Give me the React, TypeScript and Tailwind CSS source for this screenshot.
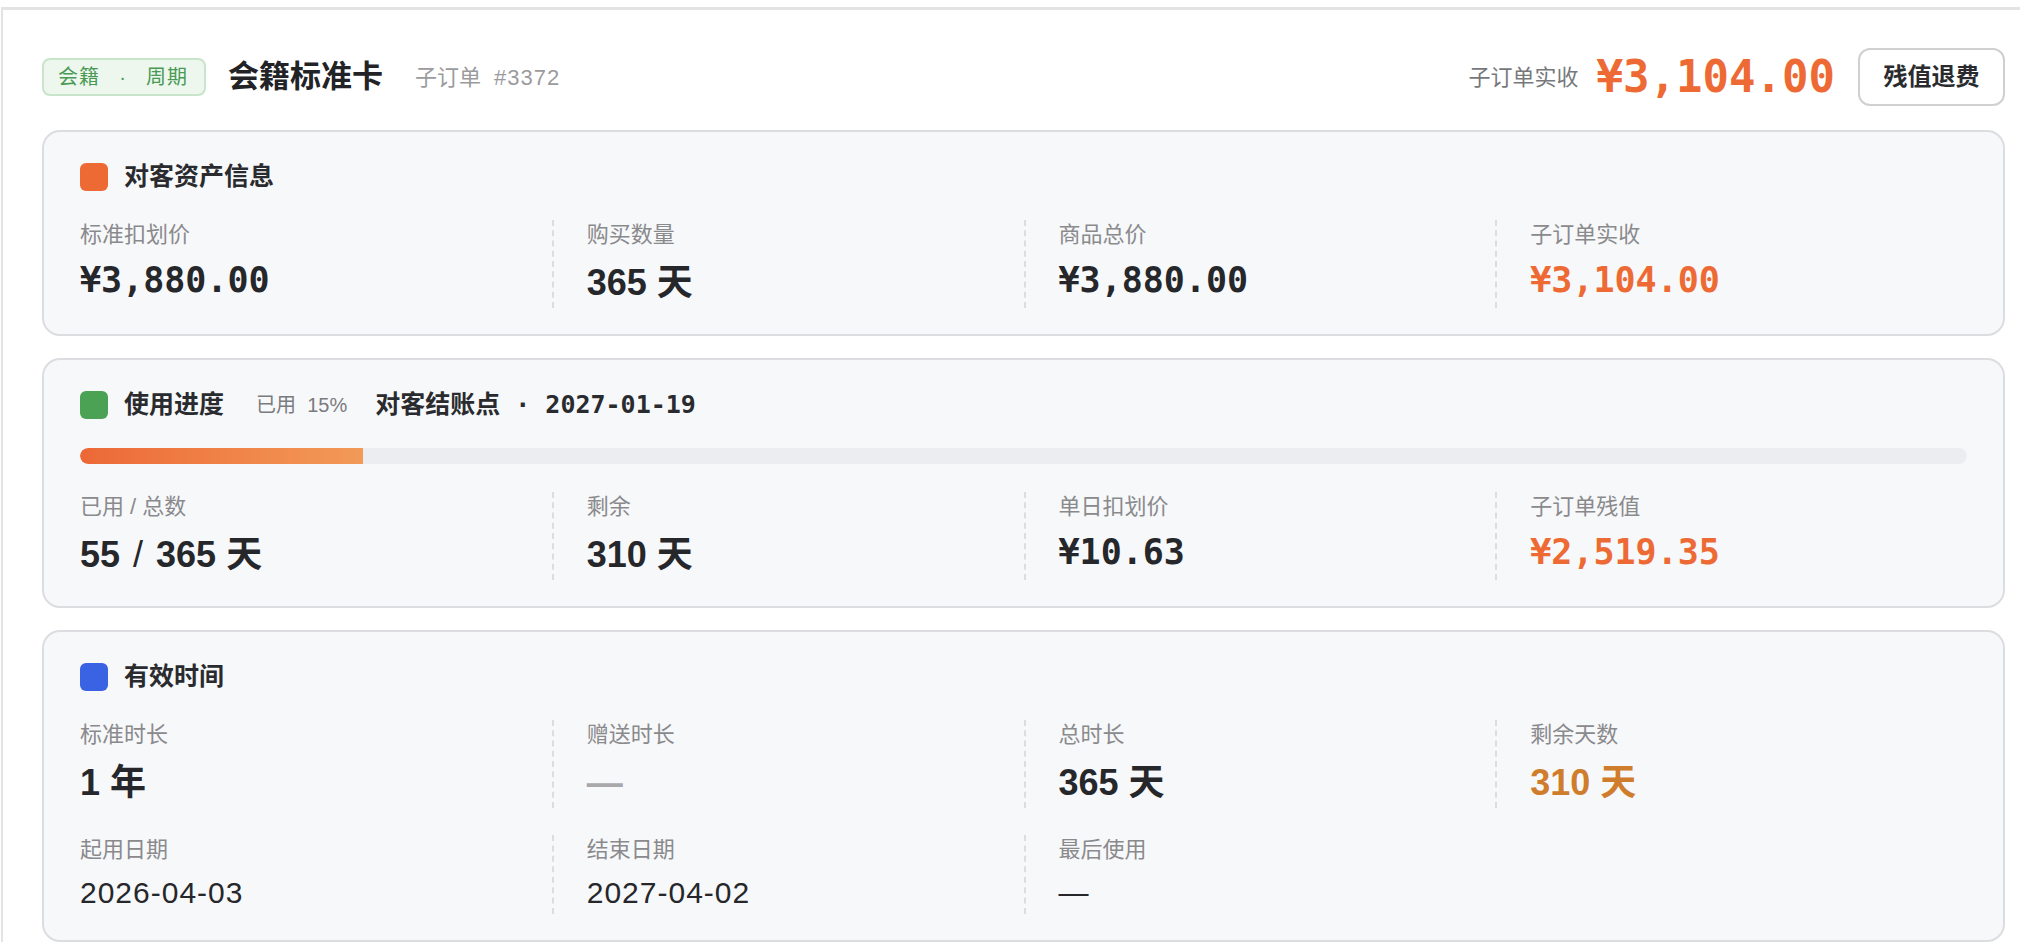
import React from 'react';

const SANS = { fontFamily: '"Liberation Sans", "Noto Sans CJK SC", sans-serif' };
const MONO = { fontFamily: '"DejaVu Sans Mono", "Noto Sans CJK SC", monospace' };

type Cell = {
  label: string;
  value: React.ReactNode;
  mono?: boolean;
  tone?: 'dark' | 'orange' | 'amber' | 'muted';
};

const toneClass: Record<NonNullable<Cell['tone']>, string> = {
  dark: 'text-[#26272b]',
  orange: 'text-[#ee6a35]',
  amber: 'text-[#cf7d2c]',
  muted: 'text-[#a9a9ab]',
};

function CellGrid({ cells, size = 'lg' }: { cells: Cell[]; size?: 'lg' | 'md' }) {
  return (
    <div className="grid grid-cols-4">
      {cells.map((c, i) => (
        <div
          key={c.label}
          className={`flex flex-col pb-[3px] ${i > 0 ? 'border-l-2 border-dashed border-[#dcdde0] pl-[33px]' : ''}`}
        >
          <div className="text-[22px] leading-[30px] text-[#8a8a8d]">{c.label}</div>
          {size === 'lg' ? (
            c.mono ? (
              <div className={`mb-[3px] mt-[8px] text-[35px] font-bold leading-[44px] ${toneClass[c.tone ?? 'dark']}`} style={MONO}>
                {c.value}
              </div>
            ) : (
              <div className={`mt-[11px] text-[36px] font-semibold leading-[44px] ${toneClass[c.tone ?? 'dark']}`} style={SANS}>
                {c.value}
              </div>
            )
          ) : (
            <div className={`mt-[10px] text-[30px] leading-[36px] tracking-[1px] ${toneClass[c.tone ?? 'dark']}`} style={SANS}>
              {c.value}
            </div>
          )}
        </div>
      ))}
    </div>
  );
}

function Card({ color, title, extra, children }: { color: string; title: string; extra?: React.ReactNode; children: React.ReactNode }) {
  return (
    <section className="rounded-[18px] border-2 border-[#dcdde0] bg-[#f7f8fa] px-[36px] pt-[30px] pb-[26px]">
      <div className="flex h-[30px] items-center">
        <span className={`h-[28px] w-[28px] rounded-[6px] ${color}`} />
        <h3 className="ml-[16px] text-[25px] font-bold text-[#2a2b2e]">{title}</h3>
        {extra}
      </div>
      {children}
    </section>
  );
}

export default function App() {
  const usedPct = 15;

  const assetCells: Cell[] = [
    { label: '标准扣划价', value: '¥3,880.00', mono: true },
    { label: '购买数量', value: '365 天' },
    { label: '商品总价', value: '¥3,880.00', mono: true },
    { label: '子订单实收', value: '¥3,104.00', mono: true, tone: 'orange' },
  ];

  const usageCells: Cell[] = [
    {
      label: '已用 / 总数',
      value: (
        <>
          55<span className="mx-[13px] font-normal">/</span>365 天
        </>
      ),
    },
    { label: '剩余', value: '310 天' },
    { label: '单日扣划价', value: '¥10.63', mono: true },
    { label: '子订单残值', value: '¥2,519.35', mono: true, tone: 'orange' },
  ];

  const durationCells: Cell[] = [
    { label: '标准时长', value: '1 年' },
    { label: '赠送时长', value: '—', tone: 'muted' },
    { label: '总时长', value: '365 天' },
    { label: '剩余天数', value: '310 天', tone: 'amber' },
  ];

  const dateCells: Cell[] = [
    { label: '起用日期', value: '2026-04-03' },
    { label: '结束日期', value: '2027-04-02' },
    { label: '最后使用', value: '—' },
  ];

  return (
    <div className="min-h-screen bg-white" style={SANS}>
      <div className="ml-[1px] mt-[7px] border-l-2 border-t-[3px] border-[#e3e3e5] pl-[39px] pr-[15px] pt-[38px]">
        {/* Header */}
        <div className="flex h-[58px] items-center">
          <span className="flex h-[38px] items-center gap-[19px] rounded-[8px] border-2 border-[#c8e5cc] bg-[#edf7ee] pl-[14px] pr-[16px] text-[20px] tracking-[1px] text-[#4a9a55]">
            <span>会籍</span>
            <span className="w-[8px] text-center">·</span>
            <span>周期</span>
          </span>
          <h1 className="ml-[22px] text-[31px] font-bold text-[#222326]">会籍标准卡</h1>
          <span className="ml-[32px] text-[22px] text-[#9b9b9e]">子订单</span>
          <span className="ml-[13px] text-[22px] tracking-[1px] text-[#9b9b9e]">#3372</span>

          <div className="ml-auto flex items-center">
            <span className="text-[22px] text-[#77787b]">子订单实收</span>
            <span className="ml-[18px] text-[44px] font-bold leading-none text-[#ee6a35]" style={MONO}>
              ¥3,104.00
            </span>
            <button className="ml-[23px] h-[58px] w-[147px] rounded-[12px] border-2 border-[#cfd0d2] bg-white text-[24px] font-bold text-[#2a2b2e]">
              残值退费
            </button>
          </div>
        </div>

        <div className="mt-[24px] flex flex-col gap-[22px]">
          <Card color="bg-[#ee6a35]" title="对客资产信息">
            <div className="mt-[28px]">
              <CellGrid cells={assetCells} />
            </div>
          </Card>

          <Card
            color="bg-[#4ba254]"
            title="使用进度"
            extra={
              <>
                <span className="ml-[32px] text-[20px] text-[#7a7b7e]">已用&nbsp;&nbsp;{usedPct}%</span>
                <span className="ml-[28px] text-[25px] font-bold text-[#2a2b2e]" style={MONO}>
                  对客结账点 · 2027-01-19
                </span>
              </>
            }
          >
            <div className="mt-[28px] h-[16px] w-full overflow-hidden rounded-full bg-[#ecedf1]">
              <div
                className="h-full rounded-l-full bg-gradient-to-r from-[#ec6836] to-[#f29a58]"
                style={{ width: `${usedPct}%` }}
              />
            </div>
            <div className="mt-[28px]">
              <CellGrid cells={usageCells} />
            </div>
          </Card>

          <Card color="bg-[#3a63e3]" title="有效时间">
            <div className="mt-[28px]">
              <CellGrid cells={durationCells} />
            </div>
            <div className="mt-[27px]">
              <CellGrid cells={dateCells} size="md" />
            </div>
          </Card>
        </div>
      </div>
    </div>
  );
}
